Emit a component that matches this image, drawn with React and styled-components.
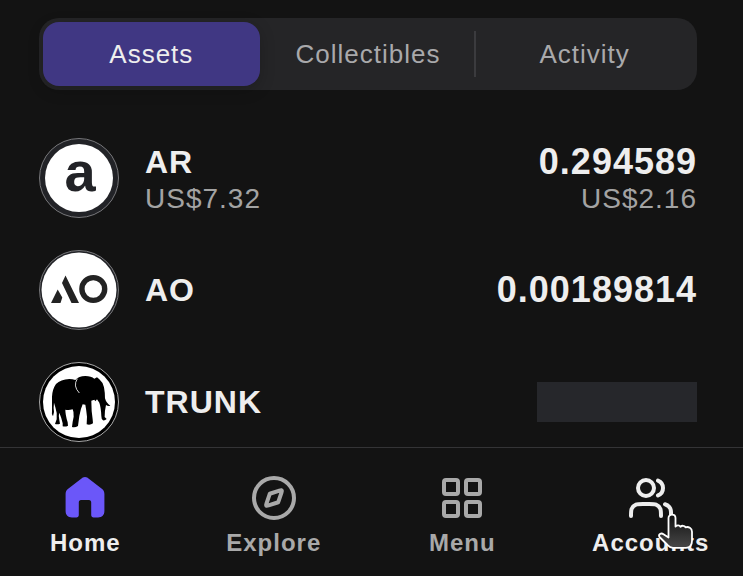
import React, { useState } from "react";
import styled, { createGlobalStyle } from "styled-components";

const GlobalStyle = createGlobalStyle`
  * { box-sizing: border-box; }
  body {
    margin: 0;
    background: #131313;
    color: #eeeeee;
    font-family: "Liberation Sans", Arial, sans-serif;
    letter-spacing: 1px;
    overflow-x: hidden;
  }
`;

const Page = styled.div`
  display: flex;
  flex-direction: column;
  min-height: 100vh;
`;

const Main = styled.main`
  flex: 1;
  padding: 18px 46px 5px 39px;
`;

const TabBar = styled.div`
  display: grid;
  grid-template-columns: repeat(3, 1fr);
  align-items: center;
  padding: 4px;
  background: #252527;
  border-radius: 20px;
`;

const Tab = styled.button`
  height: 64px;
  padding: 0;
  border: 0;
  border-radius: 16px;
  font: inherit;
  font-size: 26px;
  letter-spacing: inherit;
  color: ${(p) => (p.$active ? "#eeeeee" : "#a9a9ab")};
  background: ${(p) => (p.$active ? "#403783" : "transparent")};
  box-shadow: ${(p) => (p.$active ? "0 4px 16px rgba(0, 0, 0, 0.2)" : "none")};
`;

const TabCell = styled.div`
  display: grid;
  background: ${(p) =>
    p.$divided
      ? "linear-gradient(#3b3b3e, #3b3b3e) right center / 2px 46px no-repeat"
      : "none"};
`;

const AssetList = styled.ul`
  display: flex;
  flex-direction: column;
  gap: 32px;
  margin: 48px 0 0;
  padding: 0;
  list-style: none;
`;

const AssetRow = styled.li`
  display: flex;
  align-items: center;
  gap: 26px;
`;

const TokenLogo = styled.svg`
  flex: none;
  display: block;
  width: 80px;
  height: 80px;
`;

const LogoLetter = styled.text`
  font-size: 56px;
  font-weight: 700;
  letter-spacing: 0;
  text-anchor: middle;
  fill: #222327;
`;

const AssetText = styled.div`
  flex: 1;
`;

const AssetValue = styled.div`
  text-align: right;
`;

const Symbol = styled.div`
  font-size: 32px;
  line-height: 42px;
  font-weight: 700;
`;

const Amount = styled.div`
  font-size: 36px;
  line-height: 42px;
  font-weight: 700;
`;

const Fiat = styled.div`
  font-size: 28px;
  line-height: 32px;
  color: #a3a3a3;
`;

const Placeholder = styled.div`
  width: 160px;
  height: 40px;
  background: #26272b;
`;

const Nav = styled.nav`
  border-top: 1px solid #343436;
`;

const NavGrid = styled.div`
  display: grid;
  grid-template-columns: repeat(4, 1fr);
  margin: 0 -2px 0 -9px;
  padding: 26px 0 19px;
`;

const NavLink = styled.a`
  position: relative;
  display: flex;
  flex-direction: column;
  align-items: center;
  gap: 7px;
  font-size: 24px;
  line-height: 28px;
  font-weight: 700;
  text-decoration: none;
  color: ${(p) => (p.$bright ? "#eeeeee" : "#a9a9a9")};
`;

const NavIcon = styled.svg`
  display: block;
  width: 48px;
  height: 48px;
  fill: none;
  stroke: currentColor;
  stroke-width: 2;
  stroke-linecap: round;
  stroke-linejoin: round;
`;

const Pointer = styled.svg`
  position: absolute;
  top: 38px;
  left: calc(50% + 5px);
  width: 40px;
  height: 40px;
`;

const ArLogo = () => (
  <TokenLogo viewBox="0 0 80 80" role="img" aria-label="AR logo">
    <circle cx="40" cy="40" r="39.5" fill="#222327" stroke="#77777a" />
    <circle cx="40" cy="40" r="34" fill="#fff" />
    <LogoLetter x="41" y="53">a</LogoLetter>
  </TokenLogo>
);

const AoLogo = () => (
  <TokenLogo viewBox="0 0 80 80" role="img" aria-label="AO logo">
    <circle cx="40" cy="40" r="39.5" fill="#222327" stroke="#77777a" />
    <circle cx="40" cy="40" r="37.5" fill="#fff" />
    <path d="M12 53l6.700-13.500 4.600 8L21.500 53zM26.500 25.500L40 53h-7.500L23 33z" fill="#232323" />
    <circle cx="54.300" cy="39" r="11.400" fill="none" stroke="#232323" strokeWidth="5.400" />
  </TokenLogo>
);

const TrunkLogo = () => (
  <TokenLogo viewBox="0 0 80 80" role="img" aria-label="TRUNK logo">
    <circle cx="40" cy="40" r="39.5" fill="#000" stroke="#a8a8a8" />
    <circle cx="40" cy="40" r="36" fill="#fff" />
    <g transform="translate(-3 -2) scale(0.3333)">
      <path
        d="M48 110Q49 88 60 72Q74 58 100 57Q110 57 118 60Q128 48 148 48Q166 48 175 56L183 52L190 58Q200 66 204 82Q207 98 207 115Q211 130 223 137Q216 139 210 135Q206 152 206 171L212 177Q207 182 201 181Q196 178 196 168Q195 142 190 128L183 118L178 124L175 119L166 122Q166 154 170 178L171 190Q163 196 152 193L153 170Q151 150 148 134L140 133Q134 146 130 168L126 198Q117 204 108 201Q109 188 113 170Q114 156 110 148Q98 152 88 149Q88 164 95 187L96 197Q89 201 80 199L80 190Q76 172 70 158Q67 166 70 180L72 191Q65 194 57 192L62 178Q64 158 58 142L54 128Q52 144 54 156L51 169Q46 163 48 154Z"
        fill="#000"
      />
      <path d="M124 56Q110 78 130 99" fill="none" stroke="#fff" strokeWidth="2.500" />
    </g>
  </TokenLogo>
);

const HomeIcon = () => (
  <NavIcon viewBox="0 0 24 24" aria-hidden="true">
    <path
      d="M10.900 1.800c.7-.45 1.500-.45 2.200 0l7.300 5.600c.9.700 1.300 1.500 1.300 2.600v8.500c0 2-1.200 3.200-3.200 3.200h-2.200c-.7 0-1.200-.5-1.200-1.200v-6.300c0-.7-.4-1.200-1.100-1.200h-4c-.7 0-1.100.5-1.100 1.200v6.300c0 .7-.5 1.200-1.200 1.200H5.500c-2 0-3.200-1.200-3.200-3.200V10c0-1.100.4-1.900 1.300-2.600z"
      fill="#6b57f9"
      stroke="none"
    />
  </NavIcon>
);

const ExploreIcon = () => (
  <NavIcon viewBox="0 0 24 24" aria-hidden="true">
    <circle cx="12" cy="12" r="10" />
    <path d="M14.722 8.266c.489-.163.733-.244.895-.186a.5.5 0 0 1 .303.303c.058.162-.023.406-.186.895l-1.488 4.463c-.046.139-.069.208-.109.266a.5.5 0 0 1-.13.13c-.058.040-.127.063-.266.109l-4.463 1.488c-.489.163-.733.244-.895.186a.5.5 0 0 1-.303-.303c-.058-.162.023-.406.186-.895l1.488-4.463c.046-.139.069-.208.109-.266a.5.5 0 0 1 .13-.13c.058-.040.127-.063.266-.109z" />
  </NavIcon>
);

const MenuIcon = () => (
  <NavIcon viewBox="0 0 24 24" aria-hidden="true">
    <rect x="3" y="3" width="7" height="7" rx="1" />
    <rect x="14" y="3" width="7" height="7" rx="1" />
    <rect x="3" y="14" width="7" height="7" rx="1" />
    <rect x="14" y="14" width="7" height="7" rx="1" />
  </NavIcon>
);

const AccountsIcon = () => (
  <NavIcon viewBox="0 0 24 24" aria-hidden="true">
    <path d="M22 21v-2c0-1.864-1.275-3.430-3-3.874M15.500 3.291a4.001 4.001 0 0 1 0 7.418M17 21c0-1.864 0-2.796-.305-3.531a4 4 0 0 0-2.164-2.164C13.796 15 12.864 15 11 15H8c-1.864 0-2.796 0-3.531.305a4 4 0 0 0-2.165 2.164C2 18.204 2 19.136 2 21" />
    <circle cx="9.500" cy="7" r="4" />
  </NavIcon>
);

const HandPointer = () => (
  <Pointer viewBox="0 0 40 40" aria-hidden="true">
    <defs>
      <linearGradient id="hand" x1="0" y1="0" x2="0" y2="1">
        <stop offset="0" stopColor="#111" />
        <stop offset="1" stopColor="#484848" />
      </linearGradient>
    </defs>
    <path
      d="M12.500 6c0-4.500 7-4.500 7 0v8.500c1.500-1.500 4-1.500 5 .3 1.500-1.600 4-1.300 5 .5 3-1 6.500 1 6.500 4.500v9c0 4-2 7-6 7H17c-2.500 0-4-1-5.500-2.800L3.500 25c-1.500-2.500 1.500-4.500 4-2.800l5 3.300z"
      fill="url(#hand)"
      stroke="#fff"
      strokeWidth="1.800"
      strokeLinejoin="round"
    />
  </Pointer>
);

const tabs = ["Assets", "Collectibles", "Activity"];

const assets = [
  { symbol: "AR", price: "US$7.32", amount: "0.294589", value: "US$2.16", Logo: ArLogo },
  { symbol: "AO", amount: "0.00189814", Logo: AoLogo },
  { symbol: "TRUNK", Logo: TrunkLogo },
];

const links = [
  { label: "Home", Icon: HomeIcon, bright: true },
  { label: "Explore", Icon: ExploreIcon },
  { label: "Menu", Icon: MenuIcon },
  { label: "Accounts", Icon: AccountsIcon, bright: true, hovered: true },
];

export default function App() {
  const [active, setActive] = useState(0);
  return (
    <Page>
      <GlobalStyle />
      <Main>
        <TabBar role="tablist">
          {tabs.map((label, i) => (
            <TabCell
              key={label}
              role="presentation"
              $divided={i < tabs.length - 1 && i !== active && i + 1 !== active}
            >
              <Tab role="tab" aria-selected={i === active} $active={i === active} onClick={() => setActive(i)}>
                {label}
              </Tab>
            </TabCell>
          ))}
        </TabBar>
        <AssetList>
          {assets.map(({ symbol, price, amount, value, Logo }) => (
            <AssetRow key={symbol}>
              <Logo />
              <AssetText>
                <Symbol>{symbol}</Symbol>
                {price && <Fiat>{price}</Fiat>}
              </AssetText>
              <AssetValue>
                {amount ? <Amount>{amount}</Amount> : <Placeholder aria-label="Loading balance" />}
                {value && <Fiat>{value}</Fiat>}
              </AssetValue>
            </AssetRow>
          ))}
        </AssetList>
      </Main>
      <Nav>
        <NavGrid>
          {links.map(({ label, Icon, bright, hovered }) => (
            <NavLink key={label} href="#" $bright={bright}>
              <Icon />
              {label}
              {hovered && <HandPointer />}
            </NavLink>
          ))}
        </NavGrid>
      </Nav>
    </Page>
  );
}
